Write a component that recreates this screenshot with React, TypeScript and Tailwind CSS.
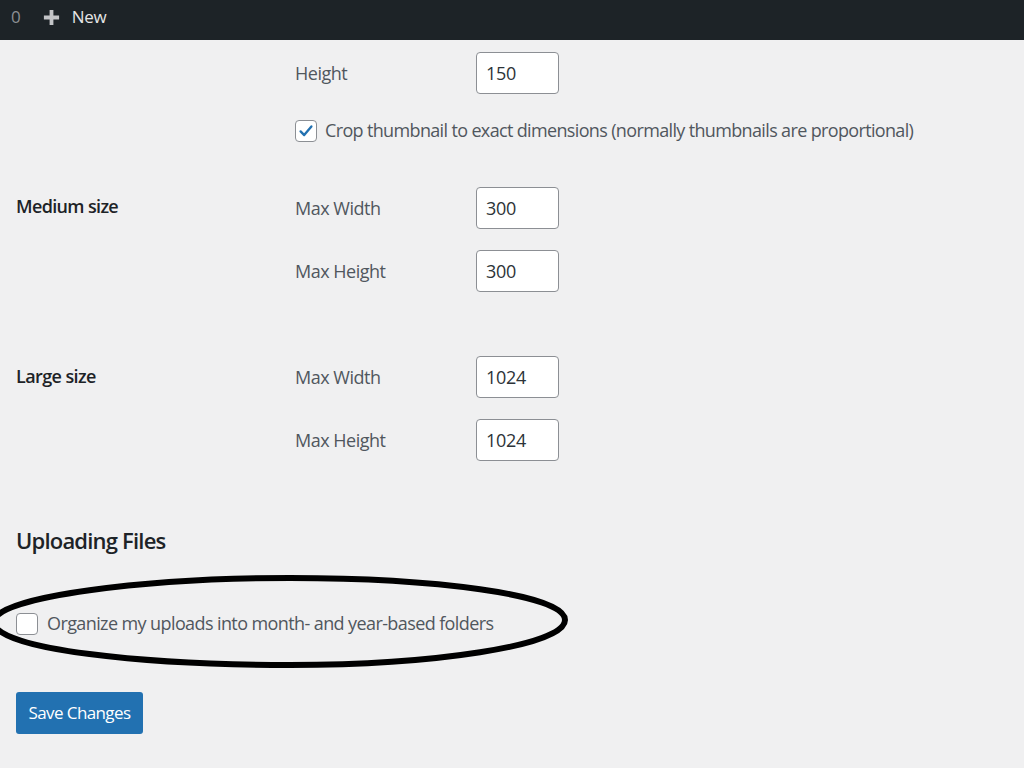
const font = { fontFamily: '"Open Sans", "Noto Sans", sans-serif' }

const Field = ({ label, value }: { label: string; value: string }) => (
  <div className="flex items-center">
    <span className="w-[181px] text-[18px] tracking-[-0.5px] text-[#50575e]">{label}</span>
    <div className="flex h-[42px] w-[83px] items-center rounded-[4px] border border-[#8c8f94] bg-white pl-[9px] text-[18px] tracking-[-0.3px] text-[#2c3338]">
      {value}
    </div>
  </div>
)

const Checkbox = ({ checked }: { checked?: boolean }) => (
  <span className="relative z-10 flex h-[22px] w-[22px] shrink-0 items-center justify-center rounded-[4px] border border-[#8c8f94] bg-white">
    {checked && (
      <svg width="18" height="18" viewBox="0 0 20 20">
        <path d="M4 10.5 L8 14.5 L16 5" fill="none" stroke="#2271b1" strokeWidth="2.6" strokeLinecap="round" strokeLinejoin="round" />
      </svg>
    )}
  </span>
)

export default function App() {
  return (
    <div className="min-h-[768px] w-[1024px] overflow-hidden bg-[#f0f0f1]" style={font}>
      <div className="flex h-[40px] items-center bg-[#1d2327] pb-[6px]">
        <span className="ml-[11px] text-[17px] text-[#8c8f94]">0</span>
        <svg className="ml-[21px]" width="19" height="19" viewBox="0 0 20 20">
          <path d="M10 2 V18 M2 10 H18" stroke="#c3c4c7" strokeWidth="4" />
        </svg>
        <span className="ml-[11px] text-[17px] tracking-[-0.3px] text-[#e6e6e6]">New</span>
      </div>

      <div className="pl-[16px]">
        <div className="ml-[279px] pt-[12px]">
          <Field label="Height" value="150" />
          <div className="mt-[23px] flex items-center gap-[8px] text-[18px] text-[#50575e]">
            <Checkbox checked />
            <span className="tracking-[-0.65px]">Crop thumbnail to exact dimensions (normally thumbnails are proportional)</span>
          </div>
        </div>

        <div className="mt-[43px] flex">
          <div className="w-[279px] pt-[6px] text-[18px] font-semibold tracking-[-0.65px] text-[#1d2327]">Medium size</div>
          <div className="flex flex-col gap-[21px]">
            <Field label="Max Width" value="300" />
            <Field label="Max Height" value="300" />
          </div>
        </div>

        <div className="mt-[64px] flex">
          <div className="w-[279px] pt-[7px] text-[18px] font-semibold tracking-[-0.6px] text-[#1d2327]">Large size</div>
          <div className="flex flex-col gap-[21px]">
            <Field label="Max Width" value="1024" />
            <Field label="Max Height" value="1024" />
          </div>
        </div>

        <h2 className="mt-[64px] text-[22px] leading-[30px] font-semibold tracking-[-0.8px] text-[#1d2327]">Uploading Files</h2>

        <div className="relative mt-[55px] flex items-center gap-[9px] text-[18px] text-[#50575e]">
          <Checkbox />
          <span className="relative z-10 tracking-[-0.6px]">Organize my uploads into month- and year-based folders</span>
          <svg className="pointer-events-none absolute left-[-16px] top-[-40px]" width="572" height="104" viewBox="0 0 572 104">
            <path
              d="M-6 52 C -6 26, 150 8, 290 8 C 430 8, 565 24, 565 50 C 565 76, 430 95, 290 95 C 150 95, -6 80, -6 52 Z"
              fill="none"
              stroke="#000"
              strokeWidth="6"
            />
          </svg>
        </div>

        <button className="mt-[55px] h-[42px] w-[127px] rounded-[3px] bg-[#2271b1] text-[17px] tracking-[-0.6px] text-white">
          Save Changes
        </button>
      </div>
    </div>
  )
}
